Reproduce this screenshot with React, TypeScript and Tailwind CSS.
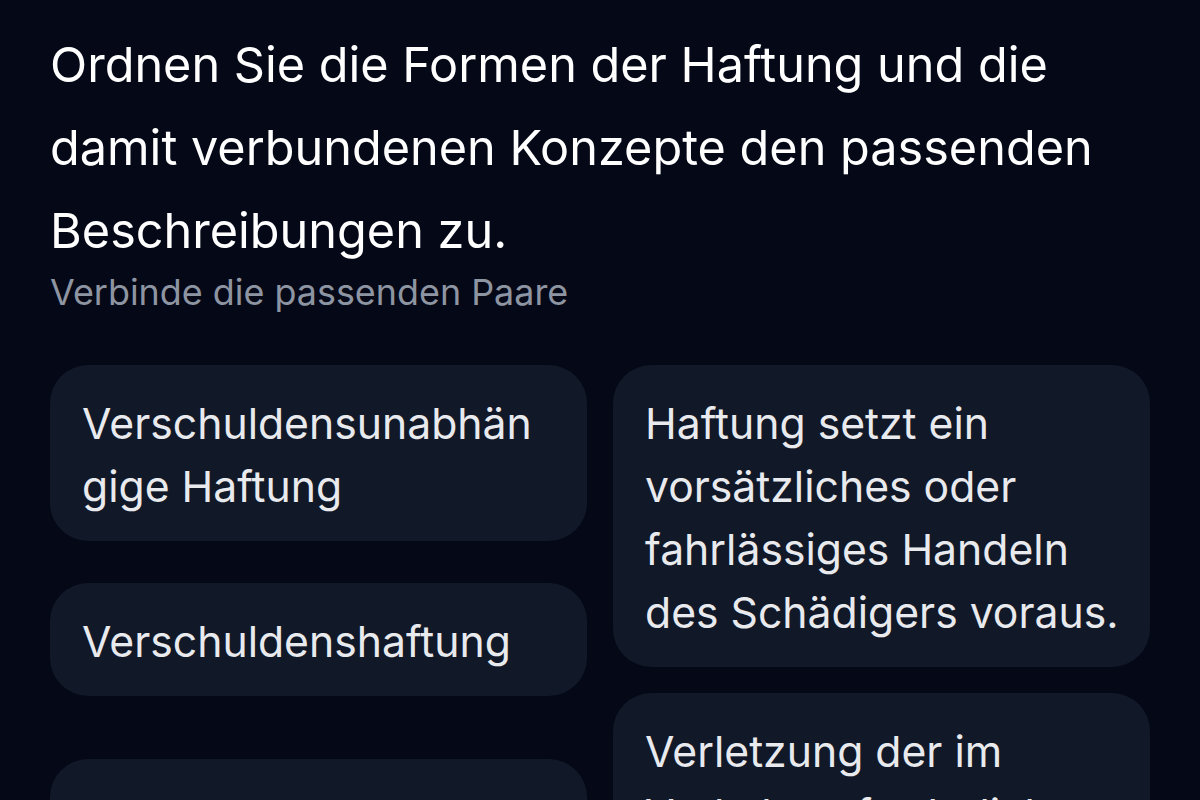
const leftItems = [
  { id: 'a', text: 'Verschuldensunabhängige Haftung', gap: '' },
  { id: 'b', text: 'Verschuldenshaftung', gap: 'mt-[42px]' },
  { id: 'c', text: 'Fahrlässigkeit', gap: 'mt-[63px]' },
];

const rightItems = [
  { id: '1', text: 'Haftung setzt ein vorsätzliches oder fahrlässiges Handeln des Schädigers voraus.', gap: '' },
  { id: '2', text: 'Verletzung der im Verkehr erforderlichen Sorgfalt.', gap: 'mt-[26px]' },
];

const PairCard = ({ text, className }: { text: string; className: string }) => (
  <button
    className={`w-full text-left rounded-[38px] bg-[#111827] pl-8 pt-[27px] pb-[23px] text-[42.7px] leading-[63px] text-[#e8eaee] break-words ${className}`}
  >
    {text}
  </button>
);

export default function App() {
  return (
    <div
      className="h-[800px] overflow-hidden bg-[#050816] px-[50px] pt-[23px]"
      style={{ fontFamily: 'Inter, "Noto Sans", sans-serif' }}
    >
      <h1 className="text-[48.6px] leading-[83px] font-normal text-white">
        Ordnen Sie die Formen der Haftung und die damit verbundenen Konzepte den passenden Beschreibungen zu.
      </h1>
      <p className="text-[35.9px] leading-[40px] text-[#8e95a2]">Verbinde die passenden Paare</p>

      <div className="mt-[53px] grid grid-cols-2 gap-x-[26px] items-start">
        <div className="flex flex-col">
          {leftItems.map((item) => (
            <PairCard key={item.id} text={item.text} className={`pr-8 ${item.gap}`} />
          ))}
        </div>
        <div className="flex flex-col">
          {rightItems.map((item) => (
            <PairCard key={item.id} text={item.text} className={`pr-5 ${item.gap}`} />
          ))}
        </div>
      </div>
    </div>
  );
}
